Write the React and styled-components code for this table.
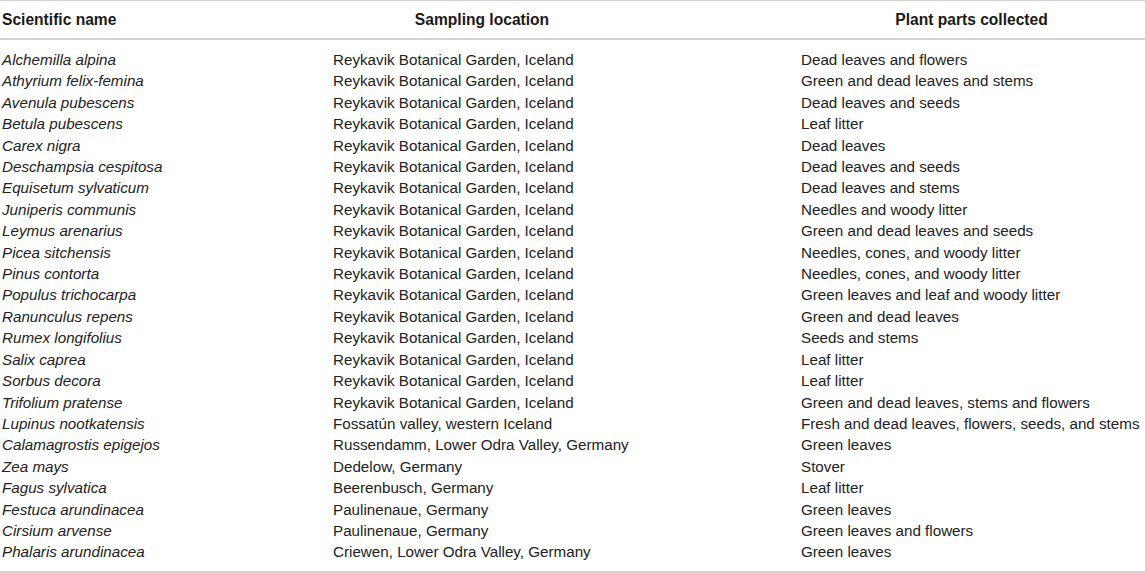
import React from 'react';
import styled, { createGlobalStyle } from 'styled-components';

const GlobalStyle = createGlobalStyle`
  html, body {
    margin: 0;
    padding: 0;
    background: #fff;
  }
  body {
    font-family: "Liberation Sans", Arial, sans-serif;
    color: #222;
  }
`;

const Table = styled.div`
  width: 1145px;
  border-top: 1px solid #d4d4d4;
  border-bottom: 2px solid #d4d4d4;
`;

const Row = styled.div`
  display: grid;
  grid-template-columns: 330px 468px 1fr;
`;

const Head = styled(Row)`
  height: 37px;
  align-items: center;
  border-bottom: 2px solid #d4d4d4;
`;

const Body = styled.div`
  padding: 9px 0 8px;
`;

const HeadCell = styled.div`
  font-size: 15.6px;
  font-weight: bold;
  color: #1a1a1a;
  padding-left: ${({ center }) => (center ? '0' : '2px')};
  padding-right: ${({ gap }) => gap || 0}px;
  text-align: ${({ center }) => (center ? 'center' : 'left')};
`;

const Cell = styled.div`
  font-size: 15.2px;
  line-height: 21.4px;
  padding-left: ${({ first }) => (first ? '2px' : '3px')};
  font-style: ${({ italic }) => (italic ? 'italic' : 'normal')};
  white-space: nowrap;
`;

const RBG = 'Reykavik Botanical Garden, Iceland';

const rows = [
  ['Alchemilla alpina', RBG, 'Dead leaves and flowers'],
  ['Athyrium felix-femina', RBG, 'Green and dead leaves and stems'],
  ['Avenula pubescens', RBG, 'Dead leaves and seeds'],
  ['Betula pubescens', RBG, 'Leaf litter'],
  ['Carex nigra', RBG, 'Dead leaves'],
  ['Deschampsia cespitosa', RBG, 'Dead leaves and seeds'],
  ['Equisetum sylvaticum', RBG, 'Dead leaves and stems'],
  ['Juniperis communis', RBG, 'Needles and woody litter'],
  ['Leymus arenarius', RBG, 'Green and dead leaves and seeds'],
  ['Picea sitchensis', RBG, 'Needles, cones, and woody litter'],
  ['Pinus contorta', RBG, 'Needles, cones, and woody litter'],
  ['Populus trichocarpa', RBG, 'Green leaves and leaf and woody litter'],
  ['Ranunculus repens', RBG, 'Green and dead leaves'],
  ['Rumex longifolius', RBG, 'Seeds and stems'],
  ['Salix caprea', RBG, 'Leaf litter'],
  ['Sorbus decora', RBG, 'Leaf litter'],
  ['Trifolium pratense', RBG, 'Green and dead leaves, stems and flowers'],
  ['Lupinus nootkatensis', 'Fossatún valley, western Iceland', 'Fresh and dead leaves, flowers, seeds, and stems'],
  ['Calamagrostis epigejos', 'Russendamm, Lower Odra Valley, Germany', 'Green leaves'],
  ['Zea mays', 'Dedelow, Germany', 'Stover'],
  ['Fagus sylvatica', 'Beerenbusch, Germany', 'Leaf litter'],
  ['Festuca arundinacea', 'Paulinenaue, Germany', 'Green leaves'],
  ['Cirsium arvense', 'Paulinenaue, Germany', 'Green leaves and flowers'],
  ['Phalaris arundinacea', 'Criewen, Lower Odra Valley, Germany', 'Green leaves'],
];

const App = () => {
  return (
    <>
      <GlobalStyle />
      <Table>
        <Head>
          <HeadCell>Scientific name</HeadCell>
          <HeadCell center gap={164}>Sampling location</HeadCell>
          <HeadCell center>Plant parts collected</HeadCell>
        </Head>
        <Body>
          {rows.map(([name, place, parts]) => (
            <Row key={name}>
              <Cell first italic>{name}</Cell>
              <Cell>{place}</Cell>
              <Cell>{parts}</Cell>
            </Row>
          ))}
        </Body>
      </Table>
    </>
  );
};

export default App;
